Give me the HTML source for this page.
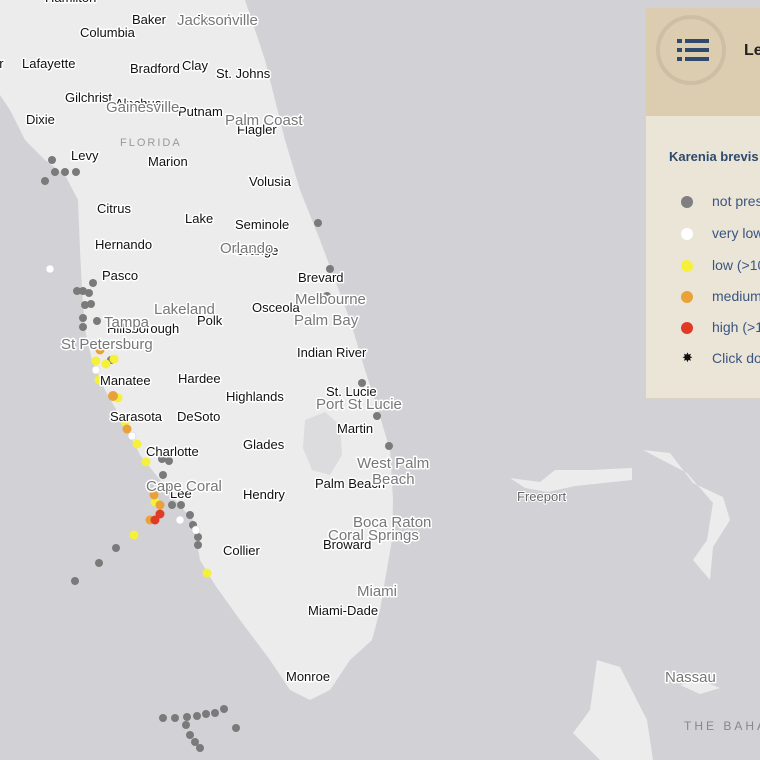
<!DOCTYPE html>
<html><head><meta charset="utf-8"><style>
html,body{margin:0;padding:0;width:760px;height:760px;overflow:hidden;background:#d2d1d6;font-family:"Liberation Sans",sans-serif}
svg{position:absolute;left:0;top:0}
.c{font-size:13px;fill:#111;paint-order:stroke;stroke:#fff;stroke-width:3px;stroke-linejoin:round}
.b{font-size:15px;fill:#777;paint-order:stroke;stroke:#fff;stroke-width:3px;stroke-linejoin:round}
#lg{position:absolute;left:645px;top:8px;width:115px;height:390px;background:#ebe5d8;border-left:1px solid #d8d0c0;border-bottom:1px solid #d8d0c0;overflow:hidden}
#hd{height:108px;background:#dccdb0}
#ci{position:absolute;left:10px;top:7px;width:62px;height:62px;border:4px solid #cdbfa4;border-radius:50%}
.it{position:absolute;left:66px;font-size:14px;color:#3a5580;white-space:nowrap}
.d{position:absolute;left:35px;width:12px;height:12px;border-radius:50%}
</style></head><body>
<svg width="760" height="760">
<path fill="#ececec" d="M0,0 L245,0 L265,60 L285,140 L300,190 L320,240 L335,280 L350,320 L365,370 L378,410 L390,450 L393,500 L392,540 L385,580 L380,610 L372,640 L350,660 L330,690 L310,700 L290,690 L270,660 L240,620 L215,585 L200,560 L193,520 L175,500 L160,480 L140,455 L122,420 L105,390 L92,360 L85,330 L82,290 L80,250 L78,200 L65,175 L45,160 L25,140 L10,110 L0,95 Z"/>
<path fill="#dcdcde" d="M305,420 L325,412 L340,425 L342,455 L330,475 L312,470 L303,448 Z"/>
<path fill="#ececec" d="M510,478 L540,482 L555,470 L590,470 L632,468 L632,480 L575,486 L548,492 L525,488 Z"/>
<path fill="#ececec" d="M643,450 L670,453 L693,483 L723,497 L730,520 L713,547 L710,580 L693,560 L707,540 L713,503 L687,473 Z"/>
<path fill="#ececec" d="M597,660 L620,667 L647,720 L653,760 L600,760 L573,733 L590,710 Z"/>
<path fill="#ececec" d="M680,685 L700,680 L720,688 L700,694 Z"/>
<g fill="#7a7a7a">
<circle cx="52" cy="160" r="4"/><circle cx="55" cy="172" r="4"/><circle cx="65" cy="172" r="4"/><circle cx="76" cy="172" r="4"/><circle cx="45" cy="181" r="4"/>
<circle cx="93" cy="283" r="4"/><circle cx="77" cy="291" r="4"/><circle cx="83" cy="291" r="4"/><circle cx="89" cy="293" r="4"/><circle cx="85" cy="305" r="4"/><circle cx="91" cy="304" r="4"/><circle cx="83" cy="318" r="4"/><circle cx="97" cy="321" r="4"/><circle cx="83" cy="327" r="4"/>
<circle cx="111" cy="360" r="4"/><circle cx="162" cy="459" r="4"/><circle cx="169" cy="461" r="4"/><circle cx="163" cy="475" r="4"/><circle cx="170" cy="490" r="4"/><circle cx="172" cy="505" r="4"/><circle cx="181" cy="505" r="4"/><circle cx="190" cy="515" r="4"/><circle cx="193" cy="525" r="4"/><circle cx="198" cy="537" r="4"/><circle cx="198" cy="545" r="4"/>
<circle cx="116" cy="548" r="4"/><circle cx="99" cy="563" r="4"/><circle cx="75" cy="581" r="4"/>
<circle cx="318" cy="223" r="4"/><circle cx="330" cy="269" r="4"/><circle cx="327" cy="296" r="4"/><circle cx="362" cy="383" r="4"/><circle cx="377" cy="416" r="4"/><circle cx="389" cy="446" r="4"/>
<circle cx="163" cy="718" r="4"/><circle cx="175" cy="718" r="4"/><circle cx="187" cy="717" r="4"/><circle cx="197" cy="716" r="4"/><circle cx="206" cy="714" r="4"/><circle cx="215" cy="713" r="4"/><circle cx="224" cy="709" r="4"/><circle cx="236" cy="728" r="4"/><circle cx="186" cy="725" r="4"/><circle cx="190" cy="735" r="4"/><circle cx="195" cy="742" r="4"/><circle cx="200" cy="748" r="4"/>
</g>
<g fill="#fff" stroke="#ccc" stroke-width=".5"><circle cx="50" cy="269" r="4"/><circle cx="96" cy="370" r="4"/><circle cx="132" cy="436" r="4"/><circle cx="180" cy="520" r="4"/><circle cx="196" cy="530" r="4"/></g>
<g fill="#f5f03a"><circle cx="96" cy="361" r="4.5"/><circle cx="106" cy="364" r="4.5"/><circle cx="114" cy="359" r="4.5"/><circle cx="99" cy="380" r="4.5"/><circle cx="118" cy="398" r="4.5"/><circle cx="125" cy="422" r="4.5"/><circle cx="137" cy="444" r="4.5"/><circle cx="146" cy="462" r="4.5"/><circle cx="155" cy="502" r="4.5"/><circle cx="134" cy="535" r="4.5"/><circle cx="207" cy="573" r="4.5"/></g>
<g fill="#e9a23a"><circle cx="100" cy="350" r="4.5"/><circle cx="113" cy="396" r="5"/><circle cx="127" cy="429" r="4.5"/><circle cx="154" cy="495" r="4.5"/><circle cx="160" cy="505" r="4.5"/><circle cx="150" cy="520" r="4.5"/></g>
<g fill="#e03a26"><circle cx="160" cy="514" r="4.5"/><circle cx="155" cy="520" r="4.5"/></g>
<g class="c">
<text x="45" y="2">Hamilton</text><text x="132" y="24">Baker</text><text x="197" y="24">Duval</text><text x="80" y="37">Columbia</text>
<text x="-8" y="68">or</text><text x="22" y="68">Lafayette</text><text x="130" y="73">Bradford</text><text x="182" y="70">Clay</text><text x="216" y="78">St. Johns</text>
<text x="65" y="102">Gilchrist</text><text x="115" y="108">Alachua</text><text x="178" y="116">Putnam</text><text x="26" y="124">Dixie</text><text x="237" y="134">Flagler</text>
<text x="71" y="160">Levy</text><text x="148" y="166">Marion</text><text x="249" y="186">Volusia</text>
<text x="97" y="213">Citrus</text><text x="185" y="223">Lake</text><text x="235" y="229">Seminole</text><text x="95" y="249">Hernando</text><text x="235" y="255">Orange</text>
<text x="102" y="280">Pasco</text><text x="298" y="282">Brevard</text><text x="252" y="312">Osceola</text><text x="197" y="325">Polk</text><text x="107" y="333">Hillsborough</text>
<text x="297" y="357">Indian River</text><text x="100" y="385">Manatee</text><text x="178" y="383">Hardee</text><text x="326" y="396">St. Lucie</text><text x="226" y="401">Highlands</text>
<text x="110" y="421">Sarasota</text><text x="177" y="421">DeSoto</text><text x="337" y="433">Martin</text><text x="243" y="449">Glades</text><text x="146" y="456">Charlotte</text>
<text x="315" y="488">Palm Beach</text><text x="170" y="498">Lee</text><text x="243" y="499">Hendry</text><text x="323" y="549">Broward</text><text x="223" y="555">Collier</text>
<text x="308" y="615">Miami-Dade</text><text x="286" y="681">Monroe</text>
</g>
<g class="b">
<text x="177" y="25">Jacksonville</text><text x="106" y="112">Gainesville</text><text x="225" y="125">Palm Coast</text><text x="220" y="253">Orlando</text>
<text x="154" y="314">Lakeland</text><text x="295" y="304">Melbourne</text><text x="294" y="325">Palm Bay</text><text x="104" y="327">Tampa</text><text x="61" y="349">St Petersburg</text>
<text x="316" y="409">Port St Lucie</text><text x="357" y="468">West Palm</text><text x="372" y="484">Beach</text><text x="146" y="491">Cape Coral</text><text x="353" y="527">Boca Raton</text><text x="328" y="540">Coral Springs</text><text x="357" y="596">Miami</text><text x="665" y="682">Nassau</text>
</g>
<text x="120" y="146" font-size="11" fill="#999" letter-spacing="2">FLORIDA</text>
<text x="517" y="501" font-size="13" fill="#666" style="paint-order:stroke;stroke:#fff;stroke-width:2px">Freeport</text>
<text x="684" y="730" font-size="12" fill="#888" letter-spacing="3">THE BAHAMAS</text>
</svg>
<div id="lg"><div id="hd"></div>
<div id="ci"><svg width="62" height="62" style="position:absolute;left:0;top:0"><g fill="#2f4a6b"><rect x="17" y="20" width="5" height="4"/><rect x="25" y="20" width="24" height="4"/><rect x="17" y="29" width="5" height="4"/><rect x="25" y="29" width="24" height="4"/><rect x="17" y="38" width="5" height="4"/><rect x="25" y="38" width="24" height="4"/></g></svg></div>
<div style="position:absolute;left:98px;top:34px;font-weight:bold;font-size:16px;color:#222;white-space:nowrap">Legend</div>
<div style="position:absolute;left:23px;top:141px;font-weight:bold;font-size:13px;color:#2c4a6e;white-space:nowrap">Karenia brevis</div>
<div class="d" style="top:188px;background:#7f7f7f"></div><div class="it" style="top:185px">not present</div>
<div class="d" style="top:220px;background:#fff"></div><div class="it" style="top:217px">very low</div>
<div class="d" style="top:252px;background:#f5f03a"></div><div class="it" style="top:249px">low (&gt;10</div>
<div class="d" style="top:283px;background:#e9a23a"></div><div class="it" style="top:280px">medium</div>
<div class="d" style="top:314px;background:#e03a26"></div><div class="it" style="top:311px">high (&gt;1</div>
<div style="position:absolute;left:36px;top:342px;font-size:13px;color:#111">✸</div><div class="it" style="top:342px">Click do</div>
</div>
</body></html>
